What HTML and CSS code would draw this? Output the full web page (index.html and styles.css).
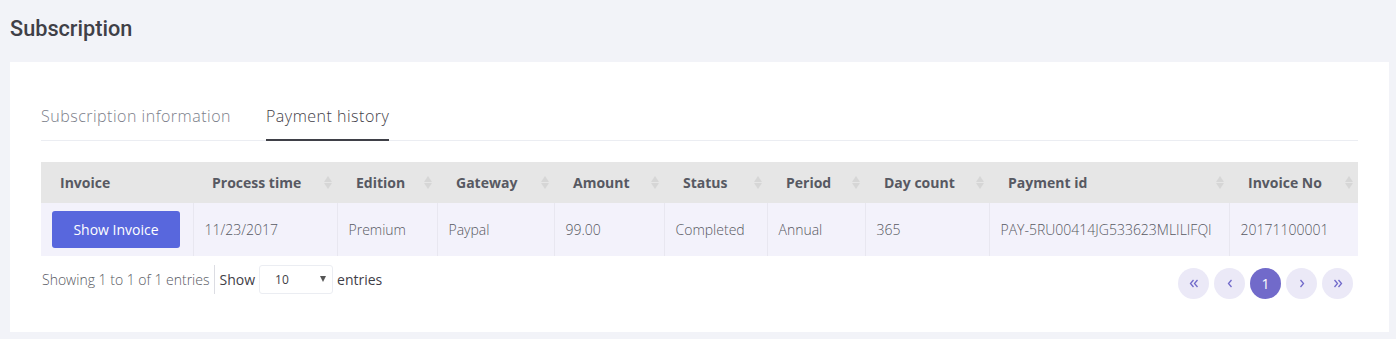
FILE: index.html
```html
<!DOCTYPE html>
<html lang="en">
<head>
    <meta charset="UTF-8">
    <title>Subscription</title>
    <link rel="stylesheet" href="styles.css">
</head>
<body>
    <h3 class="page_title">Subscription</h3>
    <div class="card">
        <ul class="tabs">
            <li class="tab">Subscription information</li>
            <li class="tab active">Payment history</li>
        </ul>
        <table class="grid">
            <colgroup>
                <col style="width:152px">
                <col style="width:144px">
                <col style="width:100px">
                <col style="width:117px">
                <col style="width:110px">
                <col style="width:103px">
                <col style="width:98px">
                <col style="width:124px">
                <col style="width:240px">
                <col style="width:129px">
            </colgroup>
            <thead>
                <tr>
                    <th><div class="th_in">Invoice</div></th>
                    <th><div class="th_in">Process time<i class="sort"></i></div></th>
                    <th><div class="th_in">Edition<i class="sort"></i></div></th>
                    <th><div class="th_in">Gateway<i class="sort"></i></div></th>
                    <th><div class="th_in">Amount<i class="sort"></i></div></th>
                    <th><div class="th_in">Status<i class="sort"></i></div></th>
                    <th><div class="th_in">Period<i class="sort"></i></div></th>
                    <th><div class="th_in">Day count<i class="sort"></i></div></th>
                    <th><div class="th_in">Payment id<i class="sort"></i></div></th>
                    <th><div class="th_in">Invoice No<i class="sort"></i></div></th>
                </tr>
            </thead>
            <tbody>
                <tr>
                    <td><button class="btn">Show Invoice</button></td>
                    <td>11/23/2017</td>
                    <td>Premium</td>
                    <td>Paypal</td>
                    <td>99.00</td>
                    <td>Completed</td>
                    <td>Annual</td>
                    <td>365</td>
                    <td>PAY-5RU00414JG533623MLILIFQI</td>
                    <td>20171100001</td>
                </tr>
            </tbody>
        </table>
        <div class="foot">
            <div class="info">
                <span class="count">Showing 1 to 1 of 1 entries</span>
                <span class="length">Show
                    <span class="select">10<i class="caret"></i></span>
                    entries</span>
            </div>
            <div class="pager">
                <a class="page">
                    <svg width="10" height="9" viewBox="0 0 10 9"><path d="M4.5 1 L1.5 4.5 L4.5 8 M8.5 1 L5.5 4.5 L8.5 8" fill="none" stroke="#716aca" stroke-width="1.3"/></svg>
                </a>
                <a class="page">
                    <svg width="6" height="9" viewBox="0 0 6 9"><path d="M4.5 1 L1.5 4.5 L4.5 8" fill="none" stroke="#716aca" stroke-width="1.3"/></svg>
                </a>
                <a class="page current">1</a>
                <a class="page">
                    <svg width="6" height="9" viewBox="0 0 6 9"><path d="M1.5 1 L4.5 4.5 L1.5 8" fill="none" stroke="#716aca" stroke-width="1.3"/></svg>
                </a>
                <a class="page">
                    <svg width="10" height="9" viewBox="0 0 10 9"><path d="M1.5 1 L4.5 4.5 L1.5 8 M5.5 1 L8.5 4.5 L5.5 8" fill="none" stroke="#716aca" stroke-width="1.3"/></svg>
                </a>
            </div>
        </div>
    </div>
</body>
</html>
```

FILE: styles.css
```css
html, body{
    margin: 0;
    padding: 0;
}
body{
    background-color: #f2f3f8;
    font-family: "Open Sans", "Liberation Sans", sans-serif;
    color: #575962;
    padding: 0 7px 7px 10px;
}
.page_title{
    margin: 0;
    height: 62px;
    line-height: 57px;
    font-family: Roboto, "Liberation Sans", sans-serif;
    font-size: 21.7px;
    font-weight: 500;
    color: #3f4047;
}
.card{
    background-color: #fff;
    padding: 25px 31px 33px;
}
/*tabs*/
.tabs{
    list-style: none;
    margin: 0 0 21px;
    padding: 0;
    display: flex;
    border-bottom: 1px solid #ebedf2;
}
.tab{
    font-size: 16px;
    font-weight: 300;
    letter-spacing: 0.5px;
    color: #7b7e8a;
    padding: 18px 0 12px;
    margin-right: 35px;
    line-height: 22px;
    margin-bottom: -1px;
    border-bottom: 2px solid transparent;
}
.tab.active{
    color: #3f4047;
    border-bottom-color: #3f4047;
}
/*table*/
.grid{
    width: 100%;
    table-layout: fixed;
    border-collapse: collapse;
    font-size: 14px;
}
.grid th{
    background-color: #e6e6e6;
    height: 41px;
    padding: 0 5px 0 19px;
    text-align: left;
    font-weight: 700;
    color: #575962;
    white-space: nowrap;
}
.th_in{
    display: flex;
    align-items: center;
    justify-content: space-between;
}
.sort{
    display: block;
    width: 8px;
    height: 15px;
    position: relative;
}
.sort::before,
.sort::after{
    content: "";
    position: absolute;
    left: 0;
    border-left: 4px solid transparent;
    border-right: 4px solid transparent;
}
.sort::before{
    top: 1px;
    border-bottom: 6px solid #d6d6d6;
}
.sort::after{
    bottom: 1px;
    border-top: 6px solid #d6d6d6;
}
.grid td{
    background-color: #f3f2fb;
    height: 53px;
    padding: 0 11px;
    border-left: 1px solid #e8e7f0;
    font-weight: 300;
    white-space: nowrap;
    box-sizing: border-box;
}
.grid td:first-child{
    border-left: none;
}
.btn{
    width: 128px;
    height: 37px;
    border: none;
    border-radius: 3px;
    background-color: #5867dd;
    color: #fff;
    font-family: inherit;
    font-size: 14px;
    font-weight: 400;
}
/*footer*/
.foot{
    display: flex;
    justify-content: space-between;
    align-items: center;
    margin-top: 3px;
}
.info{
    display: flex;
    align-items: center;
    font-size: 14px;
    font-weight: 300;
    padding-left: 1px;
}
.count{
    padding-right: 4px;
    border-right: 1px solid #dcdde3;
    line-height: 29px;
}
.length{
    display: flex;
    align-items: center;
    padding-left: 5px;
    font-weight: 400;
    color: #3f4047;
}
.select{
    display: flex;
    align-items: center;
    justify-content: space-between;
    width: 74px;
    height: 29px;
    box-sizing: border-box;
    margin: 0 4px;
    padding: 0 6px 0 15px;
    border: 1px solid #ebedf2;
    border-radius: 3px;
    font-size: 12px;
    color: #3f4047;
}
.caret{
    border-left: 3.5px solid transparent;
    border-right: 3.5px solid transparent;
    border-top: 6px solid #555;
}
.pager{
    display: flex;
    gap: 5px;
    margin-top: 9px;
    margin-right: 5px;
}
.page{
    width: 31px;
    height: 31px;
    border-radius: 50%;
    background-color: #ebe9f7;
    display: flex;
    align-items: center;
    justify-content: center;
    font-size: 14px;
    color: #716aca;
}
.page.current{
    background-color: #716aca;
    color: #fff;
}
```
